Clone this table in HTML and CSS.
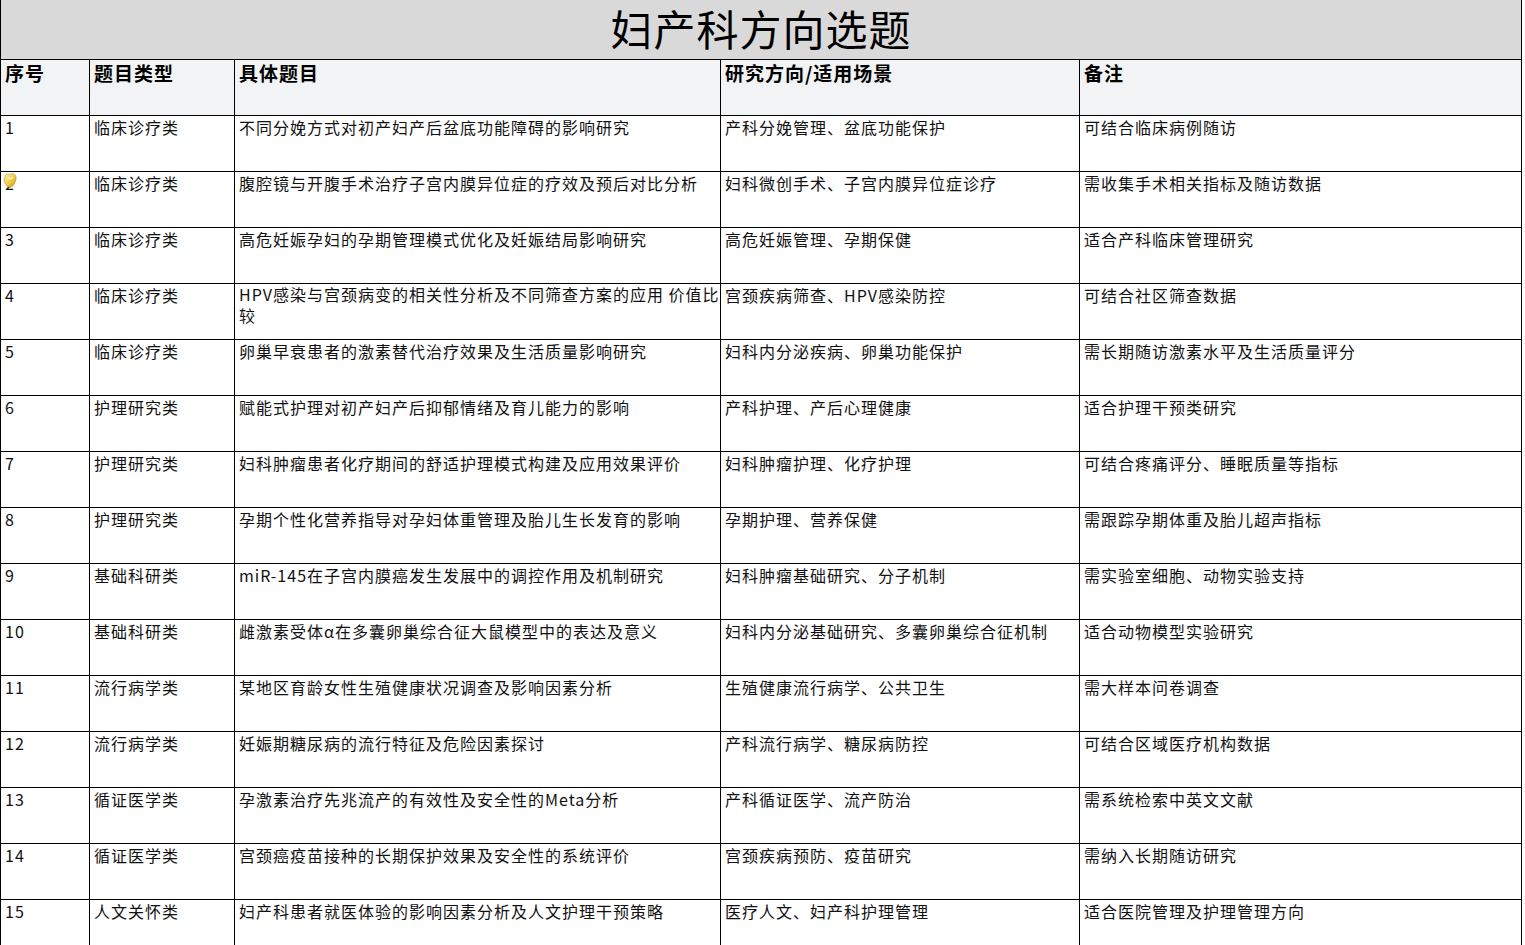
FILE: index.html
```html
<!DOCTYPE html>
<html lang="zh-CN">
<head>
<meta charset="utf-8">
<title>妇产科方向选题</title>
<link rel="stylesheet" href="styles.css">
</head>
<body>
<div class="sheet">
  <div class="title">妇产科方向选题</div>
  <div class="cell head">序号</div>
  <div class="cell head">题目类型</div>
  <div class="cell head">具体题目</div>
  <div class="cell head">研究方向/适用场景</div>
  <div class="cell head">备注</div>

  <div class="cell">1</div><div class="cell">临床诊疗类</div><div class="cell">不同分娩方式对初产妇产后盆底功能障碍的影响研究</div><div class="cell">产科分娩管理、盆底功能保护</div><div class="cell">可结合临床病例随访</div>

  <div class="cell num-icon"><span class="under">2</span><svg class="marker" viewBox="0 0 14 16" width="15" height="17"><defs><linearGradient id="g" x1="0" y1="0" x2="1" y2="1"><stop offset="0" stop-color="#fff6c0"/><stop offset="0.5" stop-color="#f2cf4a"/><stop offset="1" stop-color="#c89a1a"/></linearGradient></defs><path d="M2 3 C2 1 5 0 6 2 C7 0 11 0 12 3 C13 6 11 9 10 11 C9 13 7 14 5 13 C3 12 1 9 1 6 Z" fill="url(#g)" stroke="#b8901a" stroke-width="0.6"/><path d="M5 4 C6 6 8 6 9 4" fill="none" stroke="#fffbe0" stroke-width="1"/></svg></div><div class="cell">临床诊疗类</div><div class="cell">腹腔镜与开腹手术治疗子宫内膜异位症的疗效及预后对比分析</div><div class="cell">妇科微创手术、子宫内膜异位症诊疗</div><div class="cell">需收集手术相关指标及随访数据</div>

  <div class="cell">3</div><div class="cell">临床诊疗类</div><div class="cell">高危妊娠孕妇的孕期管理模式优化及妊娠结局影响研究</div><div class="cell">高危妊娠管理、孕期保健</div><div class="cell">适合产科临床管理研究</div>

  <div class="cell">4</div><div class="cell">临床诊疗类</div><div class="cell wrap">HPV感染与宫颈病变的相关性分析及不同筛查方案的应用 价值比<br>较</div><div class="cell">宫颈疾病筛查、HPV感染防控</div><div class="cell">可结合社区筛查数据</div>

  <div class="cell">5</div><div class="cell">临床诊疗类</div><div class="cell">卵巢早衰患者的激素替代治疗效果及生活质量影响研究</div><div class="cell">妇科内分泌疾病、卵巢功能保护</div><div class="cell">需长期随访激素水平及生活质量评分</div>

  <div class="cell">6</div><div class="cell">护理研究类</div><div class="cell">赋能式护理对初产妇产后抑郁情绪及育儿能力的影响</div><div class="cell">产科护理、产后心理健康</div><div class="cell">适合护理干预类研究</div>

  <div class="cell">7</div><div class="cell">护理研究类</div><div class="cell">妇科肿瘤患者化疗期间的舒适护理模式构建及应用效果评价</div><div class="cell">妇科肿瘤护理、化疗护理</div><div class="cell">可结合疼痛评分、睡眠质量等指标</div>

  <div class="cell">8</div><div class="cell">护理研究类</div><div class="cell">孕期个性化营养指导对孕妇体重管理及胎儿生长发育的影响</div><div class="cell">孕期护理、营养保健</div><div class="cell">需跟踪孕期体重及胎儿超声指标</div>

  <div class="cell">9</div><div class="cell">基础科研类</div><div class="cell">miR-145在子宫内膜癌发生发展中的调控作用及机制研究</div><div class="cell">妇科肿瘤基础研究、分子机制</div><div class="cell">需实验室细胞、动物实验支持</div>

  <div class="cell">10</div><div class="cell">基础科研类</div><div class="cell">雌激素受体α在多囊卵巢综合征大鼠模型中的表达及意义</div><div class="cell">妇科内分泌基础研究、多囊卵巢综合征机制</div><div class="cell">适合动物模型实验研究</div>

  <div class="cell">11</div><div class="cell">流行病学类</div><div class="cell">某地区育龄女性生殖健康状况调查及影响因素分析</div><div class="cell">生殖健康流行病学、公共卫生</div><div class="cell">需大样本问卷调查</div>

  <div class="cell">12</div><div class="cell">流行病学类</div><div class="cell">妊娠期糖尿病的流行特征及危险因素探讨</div><div class="cell">产科流行病学、糖尿病防控</div><div class="cell">可结合区域医疗机构数据</div>

  <div class="cell">13</div><div class="cell">循证医学类</div><div class="cell">孕激素治疗先兆流产的有效性及安全性的Meta分析</div><div class="cell">产科循证医学、流产防治</div><div class="cell">需系统检索中英文文献</div>

  <div class="cell">14</div><div class="cell">循证医学类</div><div class="cell">宫颈癌疫苗接种的长期保护效果及安全性的系统评价</div><div class="cell">宫颈疾病预防、疫苗研究</div><div class="cell">需纳入长期随访研究</div>

  <div class="cell">15</div><div class="cell">人文关怀类</div><div class="cell">妇产科患者就医体验的影响因素分析及人文护理干预策略</div><div class="cell">医疗人文、妇产科护理管理</div><div class="cell">适合医院管理及护理管理方向</div>
</div>
</body>
</html>
```

FILE: styles.css
```css
html, body {
  margin: 0;
  padding: 0;
  background: #ffffff;
}

body {
  font-family: "Noto Sans CJK SC", "Noto Sans", sans-serif;
  color: #111111;
  overflow: hidden;
}

.sheet {
  display: grid;
  grid-template-columns: 89px 145px 486px 359px 442px;
  grid-template-rows: 60px 56px;
  grid-auto-rows: 56px;
  width: 1522px;
  border-left: 1px solid #000;
  box-sizing: border-box;
}

.title {
  grid-column: 1 / -1;
  box-sizing: border-box;
  background: #d9d9d9;
  border-right: 1px solid #000;
  border-bottom: 1px solid #000;
  display: flex;
  align-items: center;
  justify-content: center;
  font-size: 42px;
  font-weight: 400;
  letter-spacing: 1px;
  line-height: 1;
  padding-bottom: 3px;
  color: #000;
}

.cell {
  box-sizing: border-box;
  border-right: 1px solid #000;
  border-bottom: 1px solid #000;
  padding: 1px 4px 0 4px;
  font-size: 16px;
  line-height: 20px;
  letter-spacing: 1px;
  color: #111;
  white-space: nowrap;
}

.cell.wrap {
  line-height: 21px;
  padding-top: 0;
}

.head {
  background: #f2f3f4;
  font-size: 19px;
  font-weight: 700;
  line-height: 24px;
  padding-top: 1px;
  letter-spacing: 1px;
  color: #000;
}

.num-icon {
  position: relative;
}

.under {
  color: #111;
}

.marker {
  position: absolute;
  left: 2px;
  top: 1px;
}
```
